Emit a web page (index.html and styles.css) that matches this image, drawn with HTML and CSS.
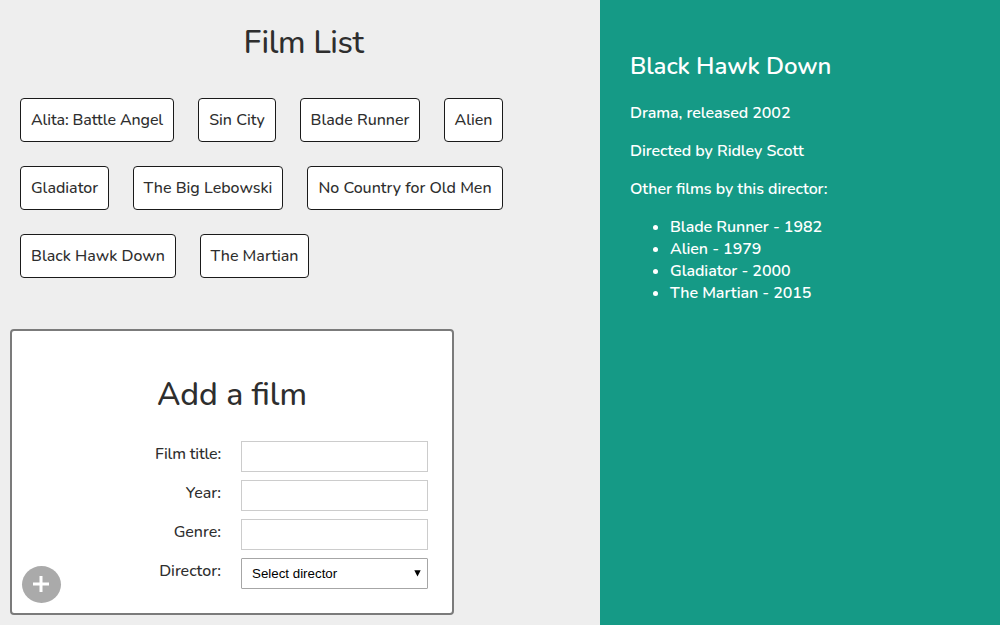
FILE: index.html
```html
<!DOCTYPE html>
<html lang="en">
<head>
<meta charset="utf-8">
<title>Film List</title>
<link rel="stylesheet" href="styles.css">
</head>
<body>
<div class="app">
  <main class="main">
    <h1 class="title">Film List</h1>
    <ul class="films">
      <li class="film w-alita">Alita: Battle Angel</li>
      <li class="film w-sin">Sin City</li>
      <li class="film w-blade">Blade Runner</li>
      <li class="film w-alien">Alien</li>
      <li class="film w-gladiator">Gladiator</li>
      <li class="film w-lebowski">The Big Lebowski</li>
      <li class="film w-country">No Country for Old Men</li>
      <li class="film w-hawk">Black Hawk Down</li>
      <li class="film w-martian">The Martian</li>
    </ul>
    <form class="add-film">
      <h2 class="form-title">Add a film</h2>
      <div class="fields">
        <label class="label label-name" for="name">Film title:</label><input class="input" id="name" type="text">
        <label class="label" for="year">Year:</label><input class="input" id="year" type="text">
        <label class="label" for="genre">Genre:</label><input class="input" id="genre" type="text">
        <label class="label" for="director">Director:</label>
        <div class="select" id="director"><span>Select director</span><svg width="7" height="7" viewBox="0 0 7 7"><path d="M0.3 0.3H6.7L3.5 6.6Z" fill="#000"/></svg></div>
      </div>
      <button class="add-button" type="button" aria-label="Add"><svg width="18" height="18" viewBox="0 0 18 18"><path d="M9 1V17M1 9H17" stroke="#fff" stroke-width="3"/></svg></button>
    </form>
  </main>
  <aside class="details">
    <h2 class="details-title">Black Hawk Down</h2>
    <p class="line">Drama, released 2002</p>
    <p class="line">Directed by Ridley Scott</p>
    <p class="line">Other films by this director:</p>
    <ul class="others">
      <li>Blade Runner - 1982</li>
      <li>Alien - 1979</li>
      <li>Gladiator - 2000</li>
      <li>The Martian - 2015</li>
    </ul>
  </aside>
</div>
</body>
</html>
```
FILE: styles.css
```css
* { box-sizing: border-box; }
body {
  margin: 0;
  background: #eee;
  color: #2e2e2e;
  font: 500 16px/22px Nunito, Lato, sans-serif;
}
.app { display: flex; height: 625px; overflow: hidden; }
.main { width: 600px; padding-top: 21px; }
.title { margin: 0; padding-left: 7px; font-size: 32px; line-height: 44px; font-weight: 500; letter-spacing: -0.35px; text-align: center; }
.films {
  display: flex; flex-wrap: wrap; gap: 24px;
  width: 530px; margin: 33px 0 0; padding: 0 0 0 20px; list-style: none;
}
.film {
  height: 44px; padding: 10px 0; border: 1px solid #1a1a1a; border-radius: 4px;
  background: #fff; text-align: center; white-space: nowrap;
}
.w-alita { width: 154px; letter-spacing: -0.12px; }
.w-sin { width: 78px; }
.w-blade { width: 120px; }
.w-alien { width: 59px; }
.w-gladiator { width: 89px; }
.w-lebowski { width: 150px; }
.w-country { width: 196px; }
.w-hawk { width: 156px; }
.w-martian { width: 109px; }
.add-film {
  position: relative; width: 444px; height: 286px; margin: 51px 0 0 10px; padding: 42px 24px 0;
  border: 2px solid #7b7b7b; border-radius: 4px; background: #fff;
}
.form-title { margin: 0; font-size: 32px; line-height: 44px; font-weight: 500; text-align: center; }
.fields {
  display: grid; grid-template-columns: 1fr 187px; column-gap: 20px; row-gap: 8px;
  margin-top: 24px;
}
.label { padding-top: 2px; text-align: right; }
.label-name { letter-spacing: -0.2px; }
.input { width: 187px; height: 31px; margin: 0; border: 1px solid #ccc; background: #fff; }
.select {
  display: flex; align-items: center; justify-content: space-between;
  height: 31px; padding: 0 6px 0 10px; border: 1px solid #a6a6a6; border-radius: 1px;
  color: #000; font: 13.33px "Liberation Sans", Arial, sans-serif;
}
.add-button {
  position: absolute; left: 10px; bottom: 10px; display: grid; place-items: center;
  width: 39px; height: 37px; padding: 0 1px 1px 0; border: 0; border-radius: 50%; background: #aaa;
}
.details {
  width: 400px; padding: 50px 30px; background: #159a86; color: #fff; font-weight: 600;
  letter-spacing: -0.07px; font-feature-settings: "liga" 1;
}
.details-title { margin: 0; font-size: 24px; line-height: 32px; font-weight: 600; }
.line { margin: 16px 0 0; }
.details-title + .line { margin-top: 20px; }
.others { margin: 16px 0 0; padding-left: 40px; }
```
